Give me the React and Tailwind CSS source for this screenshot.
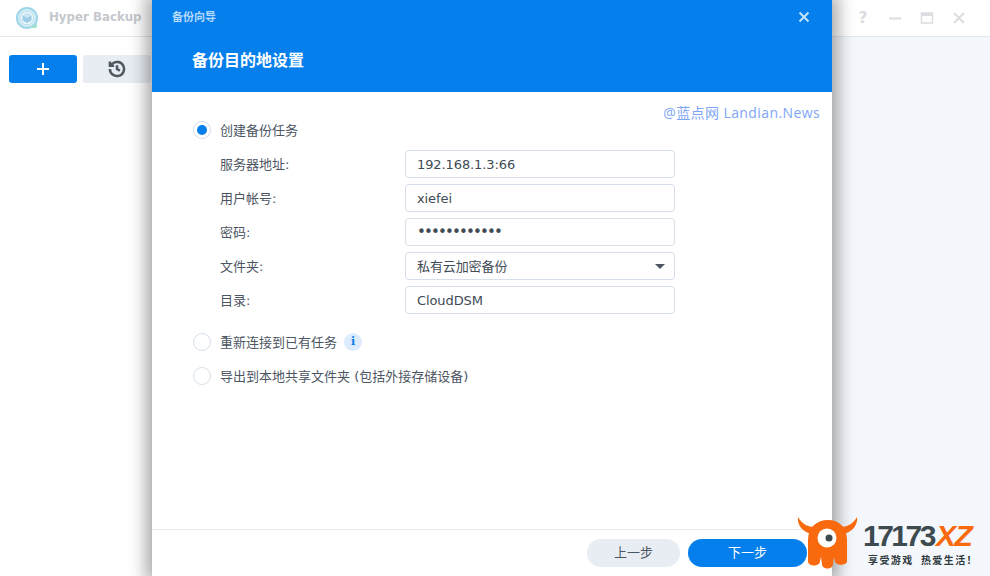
import React from "react";

const FONT = { fontFamily: '"DejaVu Sans","Noto Sans CJK SC",sans-serif' };

function Radio({ on }) {
  return (
    <span className="w-[18px] h-[18px] rounded-full border border-[#d7e0ea] bg-white flex items-center justify-center shrink-0">
      {on && <span className="w-[10px] h-[10px] rounded-full bg-[#057feb]" />}
    </span>
  );
}

function Field({ label, value, children, dots }) {
  return (
    <div className="flex items-center h-[28px]">
      <span className="w-[185px] pt-[1px] text-[13px] text-[#4c5562]">{label}</span>
      <div className="w-[270px] h-[28px] border border-[#d7e0ea] rounded-[4px] px-[11px] flex items-center justify-between text-[13px] text-[#414b55]">
        <span className={dots ? "text-[15px] tracking-[-1.85px] pt-[1px]" : "tracking-[-0.1px] pt-[1px]"}>{value}</span>
        {children}
      </div>
    </div>
  );
}

function Mascot() {
  return (
    <svg width="62" height="54" viewBox="0 0 62 54" className="shrink-0">
      <path d="M1 1 C0 9 5 15 14 18 L18 11 C11 11 5 8 1 1Z" fill="#f9690e"/>
      <path d="M60 1 C61 9 56 15 47 18 L43 11 C50 11 56 8 60 1Z" fill="#f9690e"/>
      <path d="M11 24 C11 11 20 4 31 4 C42 4 50 11 50 24 L50 45 C50 50 38 50 38 45 L37 41 L36 48 C36 54 25 54 25 48 L24 41 L23 45 C23 51 11 51 11 45Z" fill="#f9690e"/>
      <circle cx="30" cy="22" r="9.500" fill="#fff"/>
      <circle cx="32" cy="22" r="3.500" fill="#3d4a4f"/>
    </svg>
  );
}

export default function App() {
  return (
    <div className="relative w-[990px] h-[576px] overflow-hidden bg-white" style={FONT}>
      {/* background app */}
      <header className="h-[37px] border-b border-[#e3e8ef] flex items-center bg-white">
        <div className="flex items-center pl-[15px] gap-[10px]">
          <svg width="24" height="24" viewBox="0 0 24 24">
            <circle cx="12" cy="12" r="10" fill="#d8eef4" stroke="#9fd6ea" strokeWidth="2.200"/>
            <circle cx="12" cy="12" r="6.800" fill="#eaf6fa" stroke="#b4e0ee" strokeWidth="1"/>
            <path d="M12 7l4.500 2.500v5L12 17l-4.500-2.500v-5z" fill="#9ccbe6"/>
            <path d="M12 7l4.500 2.500L12 12 7.500 9.500z" fill="#cbe5f3"/>
            <path d="M14 20.500c3 0 5.500-1 7-3l1.500 2-2 3z" fill="#a0e3cf"/>
          </svg>
          <span className="text-[11.8px] font-bold text-[#c5c8cc]">Hyper Backup</span>
        </div>
        <div className="ml-auto flex items-center gap-[18px] pr-[24px]">
          <span className="text-[16px] leading-[14px] text-[#dcdde0] w-[14px] text-center font-semibold">?</span>
          <svg width="14" height="14" viewBox="0 0 14 14"><path d="M1 7.500h12" stroke="#dcdde0" strokeWidth="2"/></svg>
          <svg width="14" height="14" viewBox="0 0 14 14"><path d="M1.500 2h11v10h-11z" fill="none" stroke="#dcdde0" strokeWidth="1.500"/><path d="M1 2h12v3H1z" fill="#dcdde0"/></svg>
          <svg width="14" height="14" viewBox="0 0 14 14"><path d="M2 2l10 10M12 2L2 12" stroke="#dcdde0" strokeWidth="2"/></svg>
        </div>
      </header>
      <div className="flex h-[539px]">
        <aside className="w-[152px] shrink-0 bg-white pl-[9px] pt-[18px]">
          <div className="flex gap-[6px]">
            <div className="w-[68px] h-[28px] rounded-[3px] bg-[#057feb] flex items-center justify-center">
              <svg width="14" height="14" viewBox="0 0 14 14"><path d="M7 1v12M1 7h12" stroke="#fff" strokeWidth="2"/></svg>
            </div>
            <div className="w-[68px] h-[28px] rounded-[3px] bg-[#e8edf3] flex items-center justify-center">
              <svg width="20" height="20" viewBox="0 0 24 24" fill="none" stroke="#4e5660" strokeWidth="3"><path d="M3.500 12a8.500 8.500 0 1 0 3-6.500L3.500 8"/><path d="M3.500 3v5h5"/><path d="M12 7.500V12l3.500 2"/></svg>
            </div>
          </div>
        </aside>
        <div className="w-[680px] shrink-0" />
        <main className="flex-1 bg-[#f4f7fb]" />
      </div>

      {/* modal */}
      <div className="absolute left-[152px] top-0 w-[680px] h-[576px] bg-white flex flex-col shadow-[0_0_16px_6px_rgba(0,0,0,0.35)]">
        <div className="h-[92px] bg-[#057feb] shrink-0 relative">
          <div className="pl-[20px] pt-[10px] text-[11px] font-bold text-[#b5dafa]">备份向导</div>
          <div className="pl-[40px] pt-[22px] text-[16px] font-bold text-white">备份目的地设置</div>
          <svg className="absolute right-[22px] top-[11px]" width="12" height="12" viewBox="0 0 12 12"><path d="M1.500 1.500l9 9M10.500 1.500l-9 9" stroke="#c5e2fb" strokeWidth="2"/></svg>
        </div>
        <div className="flex-1 pl-[41px] pt-[29px] relative">
          <div className="absolute right-[12px] top-[10px] text-[14px] text-[#7ea6f6]" style={{ fontFamily: '"Open Sans","Noto Sans CJK SC",sans-serif', letterSpacing: "0.4px" }}>@蓝点网 Landian.News</div>
          <div className="flex items-center gap-[9px] h-[18px] text-[13px] text-[#4c5562]"><Radio on /><span className="pt-[1px]">创建备份任务</span></div>
          <div className="pl-[27px] pt-[11px] flex flex-col gap-[6px]">
            <Field label="服务器地址:" value="192.168.1.3:66" />
            <Field label="用户帐号:" value="xiefei" />
            <Field label="密码:" value="••••••••••••" dots />
            <Field label="文件夹:" value="私有云加密备份">
              <span className="w-0 h-0 border-x-[5px] border-x-transparent border-t-[5px] border-t-[#4c5562] mr-[-2px]" />
            </Field>
            <Field label="目录:" value="CloudDSM" />
          </div>
          <div className="flex items-center gap-[9px] h-[18px] mt-[19px] text-[13px] text-[#4c5562]">
            <Radio /><span className="pt-[1px]">重新连接到已有任务</span>
            <span className="ml-[-2px] w-[18px] h-[18px] rounded-full bg-[#dcebfd] text-[#057feb] text-[11px] font-bold flex items-center justify-center" style={{ fontFamily: '"DejaVu Serif",serif' }}>i</span>
          </div>
          <div className="flex items-center gap-[9px] h-[18px] mt-[16px] text-[13px] text-[#4c5562]">
            <Radio /><span className="pt-[1px]">导出到本地共享文件夹 (包括外接存储设备)</span>
          </div>
        </div>
        <div className="h-[47px] border-t border-[#e6e9ee] shrink-0 flex items-start pt-[9px] pl-[435px] gap-[8px]">
          <div className="w-[93px] h-[28px] rounded-full bg-[#e8edf3] text-[13px] text-[#4c5562] flex items-center justify-center">上一步</div>
          <div className="w-[119px] h-[28px] rounded-full bg-[#057feb] text-[13px] text-white flex items-center justify-center">下一步</div>
        </div>
      </div>

      {/* watermark logo */}
      <div className="absolute left-[797px] top-[516px] flex items-start">
        <Mascot />
        <div className="flex flex-col ml-[4px] mt-[5px]">
          <div className="text-[30px] leading-[30px] font-bold text-[#3d4a4f] whitespace-nowrap" style={{ fontFamily: '"Liberation Sans",sans-serif', letterSpacing: "-2.500px" }}>17173<span className="italic text-[#f9690e] ml-[2px] tracking-[-1.5px]">XZ</span></div>
          <div className="text-[10px] leading-[14px] mt-[2px] font-bold text-[#2f3a3e] whitespace-pre tracking-[1.4px] pl-[5px]" style={{ fontFamily: '"Noto Sans CJK SC",sans-serif' }}>享受游戏  热爱生活！</div>
        </div>
      </div>
    </div>
  );
}
